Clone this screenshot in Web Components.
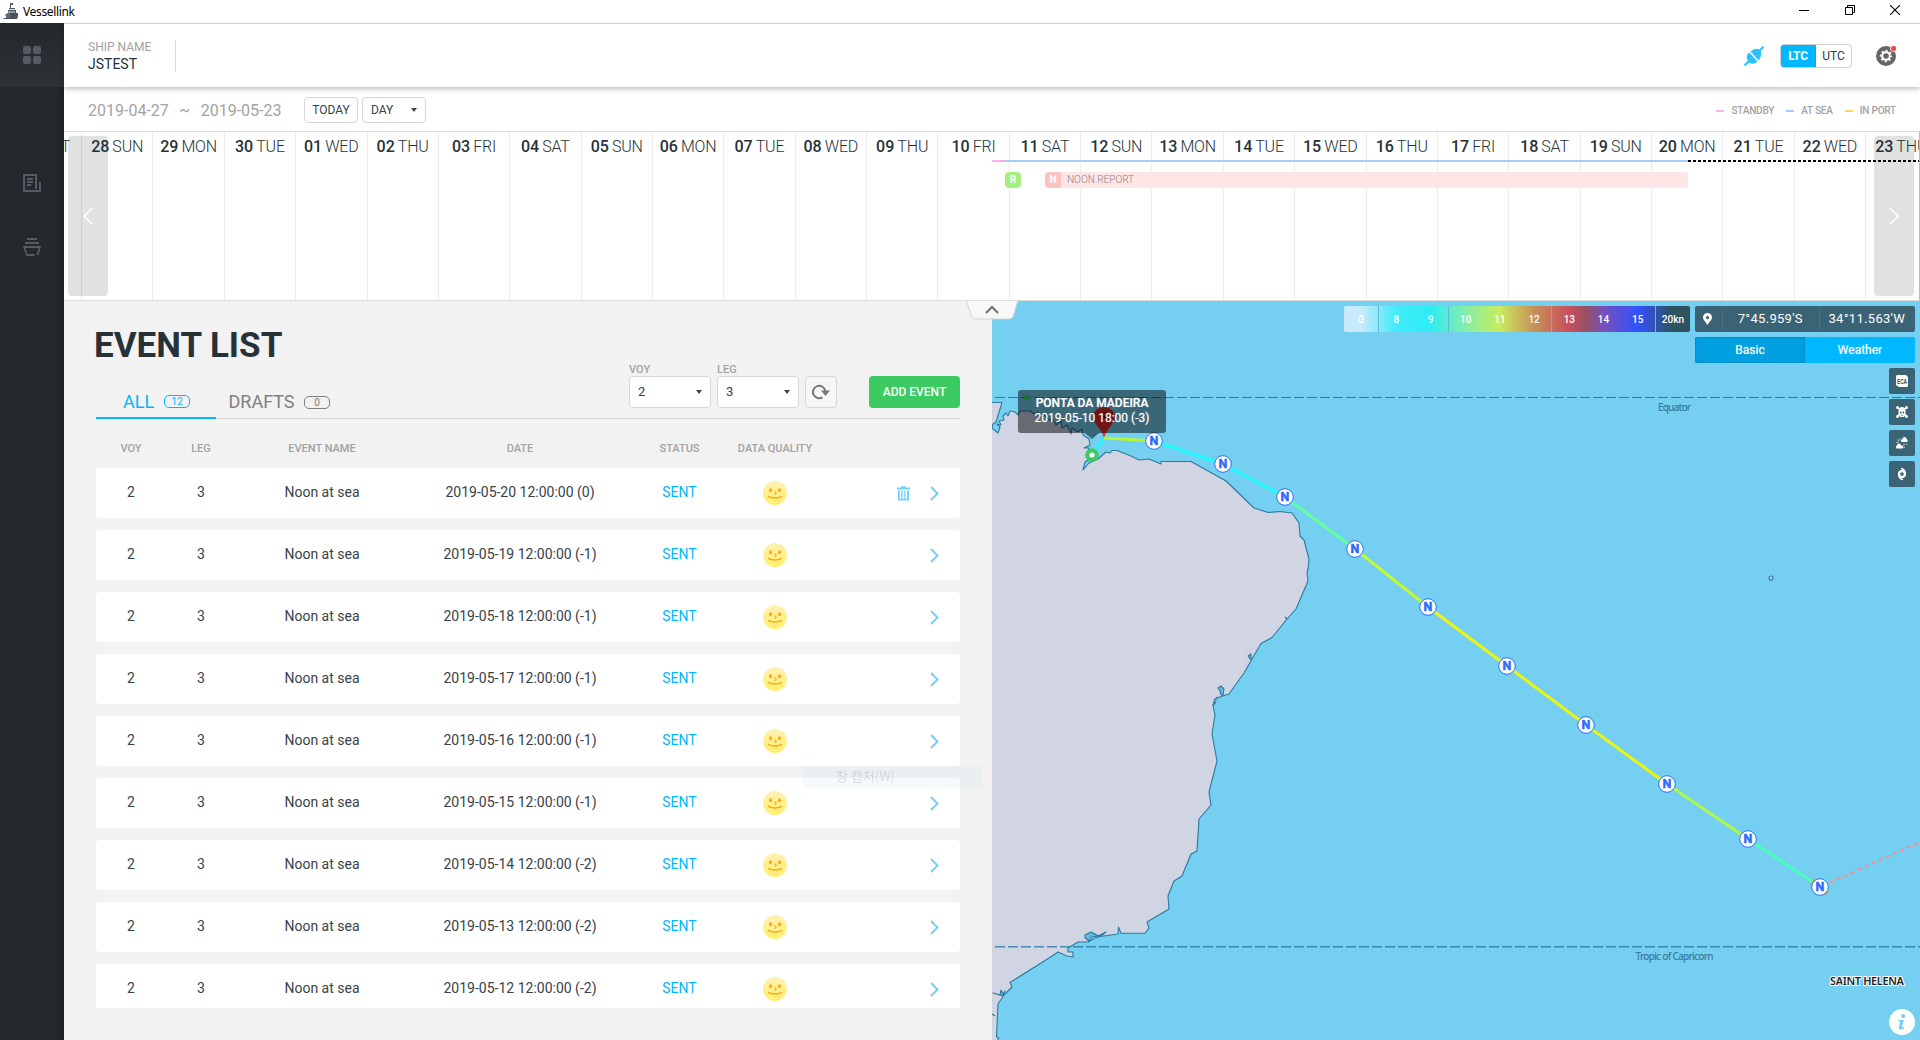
<!DOCTYPE html>
<html lang="en">
<head>
<meta charset="utf-8">
<title>Vessellink</title>
<style>
html,body{margin:0;height:100%;overflow:hidden;background:#fff}
body{font-family:Roboto,"Noto Sans CJK KR",sans-serif;color:#263238}
</style>
</head>
<body>
<vl-app></vl-app>
<script>
function define(name, css, html, setup) {
  const tpl = document.createElement('template');
  tpl.innerHTML = '<style>*{box-sizing:border-box}' + css + '</style>' + html;
  customElements.define(name, class extends HTMLElement {
    constructor() {
      super();
      this.attachShadow({ mode: 'open' }).appendChild(tpl.content.cloneNode(true));
    }
    connectedCallback() { if (setup && !this.ready) { this.ready = true; setup(this, this.shadowRoot); } }
  });
}

/* ---------- window frame ---------- */
define('vl-titlebar', `
:host{box-sizing:border-box;display:flex;height:24px;border-bottom:1px solid #dcdcdc;background:#fff;align-items:center;justify-content:space-between;padding:0 20px 0 3px;color:#000}
.brand{display:flex;align-items:center;gap:5px;font:12px/16px "Noto Sans",sans-serif;letter-spacing:-.35px}
.win{display:flex;gap:35.5px;align-items:center;padding-bottom:3px}
svg{display:block}`, `
<div class="brand"><svg width="15" height="17" viewBox="0 0 15 17"><path d="M7 0h3v2H8v3h4v2h1v3h2v3l-1 3H1l-1-1h3v-2l-1-1 3-2V7h1V5h1z" fill="#4a515c"/><path d="M7 0h2v1.500H8z" fill="#d3526a"/><path d="M6 6h6v1H6zM5 8.500h7v1H5z" fill="#dfe3e8"/><path d="M3 11l4-1v5H3z" fill="#626c79"/></svg><span>Vessellink</span></div>
<div class="win">
<svg width="10" height="10"><path d="M0 5.500h10" stroke="#000"/></svg>
<svg width="10" height="10"><path d="M.5 2.500h7v7h-7zM2.500 2.500v-2h7v7h-2" fill="none" stroke="#000"/></svg>
<svg width="10" height="10"><path d="M0 0l10 10M10 0L0 10" stroke="#000" stroke-width="1.100"/></svg>
</div>`);

define('vl-sidebar', `
:host{display:flex;flex-direction:column;width:64px;background:linear-gradient(90deg,#25292e 0,#25292e 54px,#1d2023 64px);color:#535b65}
.item{height:64px;display:flex;align-items:center;justify-content:center}
.active{background:linear-gradient(#24282c,#2e3237)}
.gap{height:64px}
svg{display:block}`, `
<div class="item active"><svg width="18" height="18" fill="currentColor"><rect width="8" height="8" rx="2"/><rect x="10" width="8" height="8" rx="2"/><rect y="10" width="8" height="8" rx="2"/><rect x="10" y="10" width="8" height="8" rx="2"/></svg></div>
<div class="gap"></div>
<div class="item"><svg width="18" height="18" fill="none" stroke="currentColor" stroke-width="2"><path d="M13 15V1H1v16h16V8M4 5h6M4 8h6M4 11h4"/></svg></div>
<div class="item"><svg width="18" height="18" fill="none" stroke="currentColor" stroke-width="1.800"><path d="M4 1h10M2 5h14M11.500 17H4L1 9h16l-2.500 8"/></svg></div>`);

define('vl-header', `
:host{box-sizing:border-box;display:flex;height:63px;background:#fff;box-shadow:0 2px 5px rgba(0,0,0,.25);position:relative;z-index:3;align-items:center;justify-content:space-between;padding:1px 24px 0}
.ship{height:32px;border-right:1px solid #d9d9d9;padding-right:24px;line-height:21px;font-size:14px;white-space:nowrap}
.ship small{display:block;font-size:12px;line-height:14px;color:#a2a2a2}
.right{display:flex;align-items:center}
.seg{display:flex;width:72px;height:24px;border-radius:4px;border:1px solid #cfcfcf;font-size:12px;margin:0 24px 0 16px;line-height:23px;text-align:center;color:#333b40;overflow:hidden}
.seg span{flex:1}.seg b{width:36px;margin:-1px 0 -1px -1px;line-height:23px;font-size:12px;background:#00b8ff;border:1px solid #1a9fe0;border-radius:4px 0 0 4px;color:#fff;font-weight:700;letter-spacing:-.2px}
svg{display:block}`, `
<div class="ship"><small>SHIP NAME</small>JSTEST</div>
<div class="right">
<svg width="20" height="20" viewBox="0 0 20 20"><g fill="#29c3fa"><path d="M3 12.500Q2 8.500 5.500 6.500L13.500 15.500Q10 19 5.500 17Q3.500 15.500 3 12.500z"/><path d="M6.500 5.500Q10 2 14 3L16.500 4Q18.500 10 14.500 14.500z"/></g><path d="M.5 19.500L5 15M15 5.500L19.500.5" stroke="#29c3fa" stroke-width="2"/><path d="M6 6l8.500 9" stroke="#fff" stroke-width=".9"/></svg>
<div class="seg"><b>LTC</b><span>UTC</span></div>
<svg width="20" height="20" viewBox="0 0 20 20"><circle cx="10" cy="10" r="10" fill="#666"/><circle cx="10" cy="10" r="3.800" fill="none" stroke="#fff" stroke-width="2"/><circle cx="10" cy="10" r="5.300" fill="none" stroke="#fff" stroke-width="1.700" stroke-dasharray="2.080 2.080" stroke-dashoffset="1.040"/><circle cx="17.500" cy="2.500" r="3.300" fill="#fff"/><circle cx="17.500" cy="2.500" r="2.600" fill="#f0464a"/></svg>
</div>`);

/* ---------- form controls ---------- */
define('vl-select', `
:host{box-sizing:border-box;display:flex;align-items:center;justify-content:space-between;background:#fff;border:1px solid #d6d6d6;border-radius:4px;padding:0 8px;font-size:13px;color:#37424a}
i{border:3px solid transparent;border-top:4px solid #444;border-bottom:0}`, `<slot></slot><i></i>`);

define('vl-toolbar', `
:host{box-sizing:border-box;display:flex;height:45px;border-bottom:1px solid #dcdcdc;padding:2px 24px 0;align-items:center;font-size:16px;color:#a2a2a2;white-space:nowrap}
.r{white-space:pre;width:216px}
.btn{width:54px;height:26px;border:1px solid #d6d6d6;border-radius:4px;font-size:12px;line-height:24px;text-align:center;color:#37424a;margin-right:4px}
vl-select{width:64px;height:26px;font-size:12px}
.lg{margin-left:auto;display:flex;font-size:10px;font-weight:500;align-items:center;letter-spacing:-.2px}
.lg i{width:8px;height:2px;margin:1px 7px 0 12px;background:var(--c)}`, `
<span class="r">2019-04-27<span style="padding:0 10.500px">~</span>2019-05-23</span><span class="btn">TODAY</span><vl-select>DAY</vl-select>
<div class="lg"><i style="--c:#ffb3ec"></i>STANDBY<i style="--c:#a3cfff"></i>AT SEA<i style="--c:#ffd35c"></i>IN PORT</div>`);

/* ---------- timeline ---------- */
define('vl-day', `
:host{box-sizing:border-box;display:flex;flex:none;width:71.360px;height:168px;border-left:1px solid #ececec;justify-content:center;font-size:16px;line-height:30px;gap:3px}
b{font-weight:500}span{font-weight:300;letter-spacing:-.15px}`, `<b></b><span></span>`,
(h, r) => { r.querySelector('b').textContent = h.getAttribute('n'); r.querySelector('span').textContent = h.getAttribute('d'); });

define('vl-timeline', `
:host{box-sizing:border-box;display:grid;height:169px;border-bottom:1px solid #dcdcdc;border-right:1px solid #bbb;overflow:hidden;background:#fff}
:host>div{grid-area:1/1;min-width:0}
.days{display:flex;margin-left:-54.300px}
.track{padding:28px 0 0 928px}
.line{display:flex;height:2px}
.line i:nth-child(1){width:13px;background:#ffaeea}.line i:nth-child(2){width:683px;background:#a3cfff}
.line i:nth-child(3){flex:1;background:repeating-linear-gradient(90deg,#000 0 3px,transparent 3px 5px)}
.bars{display:flex;padding:10px 0 0 13px;font-size:10px;line-height:16px}
.k{width:16px;text-align:center;color:#fff;font-weight:700}
.R{background:#a4ee80;border-radius:4px;margin-right:24px}
.bar{width:643px;height:16px;background:#ffe5e5;border-radius:4px;display:flex;overflow:hidden;color:#8d8484;font-weight:300}
.bar .k{background:#ffc2c2;margin-right:6px}
.nav{display:flex;justify-content:space-between;padding:4px 5px 4px 4px;z-index:1}
.nav span{width:40px;height:160px;border-radius:4px;background:rgba(38,40,46,.14);display:flex;align-items:center;justify-content:center}`, `
<div class="days"></div>
<div class="track"><div class="line"><i></i><i></i><i></i></div><div class="bars"><span class="k R">R</span><div class="bar"><span class="k">N</span>NOON REPORT</div></div></div>
<div class="nav"><span><svg width="12" height="18" fill="none" stroke="#fff" stroke-width="1.500"><path d="M10.500 1L2 9.200l8.500 8"/></svg></span><span><svg width="12" height="18" fill="none" stroke="#fff" stroke-width="1.500"><path d="M1.500 1l9 8.200-9 8"/></svg></span></div>`,
(h, r) => {
  const names = ['SAT', 'SUN', 'MON', 'TUE', 'WED', 'THU', 'FRI'];
  for (let i = 0; i < 27; i++) {
    const n = i < 4 ? 27 + i : i - 3, e = document.createElement('vl-day');
    e.setAttribute('n', String(n).padStart(2, '0'));
    e.setAttribute('d', names[i % 7]);
    r.querySelector('.days').append(e);
  }
});

/* ---------- event list ---------- */
const COLS = 'grid-template-columns:70px 70px 172px 224px 95px 96px 1fr;text-align:center;align-items:center;';
define('vl-event-row', `
:host{box-sizing:border-box;display:grid;${COLS}height:50px;background:#fff;border-radius:4px;font-size:14px;color:#37424a;flex:none;padding-bottom:2px;white-space:nowrap}
.s{color:#00b8ff}
svg{display:block}.face{margin:2px auto 0}
.act{display:flex;justify-content:flex-end;gap:20px;align-items:center;padding:2px 21px 0 0}`, `
<span>2</span><span>3</span><span>Noon at sea</span><span><slot></slot></span><span class="s">SENT</span>
<svg class="face" width="24" height="24"><defs><linearGradient id="g" x2="0" y2="1"><stop stop-color="#fff0b8"/><stop offset="1" stop-color="#ffef6c"/></linearGradient></defs><circle cx="12" cy="12" r="12" fill="url(#g)"/><g fill="#ffa500"><ellipse cx="7.500" cy="9.200" rx="1.400" ry="2"/><ellipse cx="16.500" cy="9.200" rx="1.400" ry="2"/></g><path d="M5 15.300Q12 18.700 19 15.300" fill="none" stroke="#ffa500" stroke-width="1.500"/><path d="M11.500 10.800q3 1 .3 2.700" fill="none" stroke="#ffa500" stroke-width="1.200"/></svg>
<div class="act"><svg class="bin" width="13" height="15" fill="#6cd3ff"><path d="M0 1.500h4V.3h5v1.200h4V3.500H0zM1 4.500h1.800V13h1.400V4.500h1.400V13h1.600V4.500h1.400V13H10V4.500h2V14.500H1z"/></svg><svg width="9" height="15" fill="none" stroke="#6cd3ff" stroke-width="2"><path d="M1 1l6.500 6.500L1 14"/></svg></div>`,
(h, r) => { if (!h.hasAttribute('removable')) r.querySelector('.bin').remove(); });

define('vl-event-panel', `
:host{box-sizing:border-box;display:flex;flex-direction:column;width:928px;background:#f2f2f2;padding:0 32px}
h1{font-size:35px;line-height:40px;font-weight:700;margin:25px 0 0 -2px;height:40px;white-space:nowrap}
.bar{display:flex;height:53px;border-bottom:1px solid #d4d4d4}
.tab{display:flex;align-items:center;gap:10px;font-size:18px;color:#808080;height:53px;padding-top:18px}
.tab.on{width:120px;padding-left:27px;color:#00b8ff;border-bottom:2px solid #00b8ff;padding-top:19px}
.tab+.tab{margin-left:12.500px;gap:9.500px}
.tab em{font:normal 10px/11px Roboto;width:26px;height:13px;border:1px solid;border-radius:5px;text-align:center;margin-top:1px}
.tools{display:flex;margin:-2px 0 0 auto;align-items:flex-start;height:44px}
.f{font-size:11px;font-weight:500;line-height:12px;color:#a2a2a2;margin-right:6px}
vl-select{width:82px;height:32px;font-size:13px;font-weight:400}
.re{width:32px;height:32px;margin:12px 32px 0 0;border:1px solid #d6d6d6;border-radius:4px;background:#f7f7f7;display:flex;align-items:center;justify-content:center}
.add{width:91px;height:32px;margin-top:12px;background:#3ccb61;color:#fff;border-radius:4px;font-size:12px;font-weight:500;line-height:32px;text-align:center}
.head{display:grid;${COLS}height:49px;font-size:11px;font-weight:500;color:#a2a2a2;padding-top:9px;align-items:center}
.list{display:flex;flex-direction:column;gap:12px;height:540px;overflow:hidden}
.ghost{position:absolute;left:803px;top:766px;width:179px;height:22px;background:rgba(190,225,245,.16);color:rgba(120,120,120,.22);font:13px/20px "Noto Sans CJK KR",sans-serif;padding-left:33px}`, `
<h1>EVENT LIST</h1>
<div class="bar"><div class="tab on">ALL<em>12</em></div><div class="tab">DRAFTS<em>0</em></div>
<div class="tools"><div class="f">VOY<vl-select>2</vl-select></div><div class="f">LEG<vl-select>3</vl-select></div>
<div class="re"><svg width="18" height="16" fill="none" stroke="#757575" stroke-width="2"><path d="M10.500 13.300A6.200 6.200 0 1 1 13.300 7"/><path d="M9 6.500h9L13.500 12z" fill="#757575" stroke="none"/></svg></div>
<div class="add">ADD EVENT</div></div></div>
<div class="head"><span>VOY</span><span>LEG</span><span>EVENT NAME</span><span>DATE</span><span>STATUS</span><span>DATA QUALITY</span><span></span></div>
<div class="list"></div><div class="ghost">창 캡처(W)</div>`,
(h, r) => {
  const off = [0, -1, -1, -1, -1, -1, -2, -2, -2];
  off.forEach((o, i) => {
    const e = document.createElement('vl-event-row');
    if (!i) e.setAttribute('removable', '');
    e.textContent = `2019-05-${20 - i} 12:00:00 (${o})`;
    r.querySelector('.list').append(e);
  });
});

/* ---------- map ---------- */
define('vl-chart', `:host{display:block}svg{display:block}
.n{font:700 12.500px Roboto;fill:#2f6bff;stroke:#2f6bff;stroke-width:.5;text-anchor:middle}
.geo{font:500 10px "Noto Sans",sans-serif;fill:#38799c;text-anchor:middle}`, `
<svg width="928" height="739" viewBox="992 301 928 739">
<rect x="992" y="301" width="928" height="739" fill="#74cff1"/>
<g fill="#d1d4e3" stroke="#2b7a9f" stroke-width="1.100" stroke-linejoin="round">
<path d="M990 402.500H1002L996 422L993 424L992 428L998 433L1000 427L997 424L1001 425L999 421L1004 420L1003 416L1006 413L1008 416L1010 411L1015 412L1018 415L1020 411L1030 411L1034 414L1038 412L1039 418L1044 415L1050 421L1052 418L1056 425L1061 421L1062 428L1067 425L1071 434L1072 428L1078 432L1082 429L1083 435L1089 439L1090 445L1084 448L1089 448L1087 455L1090 459L1085 462L1083 470L1089 463L1098 459L1106 452L1110 453L1112 450.500H1117L1131 456L1139 460L1149 459L1161 464L1161 461.500H1191L1226 481L1254 508L1268 512.500L1280 511.500L1292 513L1299 523L1300 536L1304 540L1309 559L1308 569L1307 573L1308 581L1296 609L1287 619L1272 637.500L1261 643.500L1252 659L1244 673L1229 694L1224 695.500L1217 698L1213 706L1215 715L1212 734L1217 761L1209 792L1211 805L1199 819L1197 851L1191 854L1182 876L1174 881L1168 896L1169 909L1147 922L1149 928L1145 933.300H1121L1118.500 927L1118 934L1100 936.500L1095 938L1088 942H1078L1068 948V952L1073 952V957L1067 956L1058 952L1049 958L1010 982.500L1012 987L1004 995L998 1004L996.500 1037L999 1038L996 1042H990Z"/>
<g fill="#5fb9dc"><path d="M1085 935l6-3 4 2 3 2-6 1-3 4-4-3z"/><path d="M1096 936l4-1 6-3-5 4z"/><path d="M1218 688l3-2 3 3-1 6-2 0-1-4zM1218 697l-3 2-2 6 3-3M1248 656l3-2v6zM1285 617l2 2"/><path d="M993 993l7 2 1-5 2 4 2-3-2 5zM992 1014l3 2" /></g>
<circle cx="1771" cy="578" r="2"/>
</g>
<g stroke="#2b7a9f" stroke-width="1.100" stroke-dasharray="10 3"><path d="M995 397.500H1920"/><path d="M995 946.700H1920" stroke-width="1.500" opacity=".8"/></g>
<text class="geo" x="1674.500" y="410.500" textLength="33">Equator</text><text class="geo" x="1674.500" y="959.500" textLength="78">Tropic of Capricorn</text>
<text x="1867" y="984.500" text-anchor="middle" textLength="74" style="font:600 11px Noto Sans,sans-serif;fill:#222;stroke:#fff;stroke-width:2px;paint-order:stroke">SAINT HELENA</text>
<circle cx="1026.500" cy="397.500" r="2.500" fill="#2ee85c"/>
<g class="route" fill="none" stroke-width="3"></g>
<path d="M1820 887L1920 842" stroke="#f58e8e" stroke-width="2" stroke-dasharray="4 3.700" stroke-dashoffset="-3"/>
<path d="M1104 438c-2-9-11-15-11-21a11 10 0 0 1 22 0c0 6-9 12-11 21z" fill="#e5282b"/><text x="1104" y="420" style="font:700 11px Roboto;fill:#7c1113;text-anchor:middle">R</text>
<circle cx="1092" cy="455" r="4.700" fill="#fff" stroke="#3ccb61" stroke-width="4.200"/>
<path d="M1811 886l4-7M1824 894l4-2" stroke="#f0a000" stroke-width="2"/>
<g class="nodes"></g>
</svg>`,
(h, r) => {
  const pts = [[1092,455],[1104,438],[1154,441],[1223,464],[1285,497],[1355,549],[1428,607],[1507,666],[1586,725],[1667,784],[1748,839],[1820,887]];
  const col = ['#2af4ff','#b4f53c','#1ffcff','#1ffcff','#62ff9e','#c4fa32','#ecf50e','#ecf50e','#ecf50e','#aef84a','#46ffb8'];
  r.querySelector('.route').innerHTML = col.map((c, i) => `<path stroke="${c}" d="M${pts[i]}L${pts[i + 1]}"/>`).join('');
  r.querySelector('.nodes').innerHTML = pts.slice(2).map(([x, y]) => `<circle cx="${x}" cy="${y}" r="8.300" fill="#fff" stroke="#2f6bff"/><text class="n" x="${x}" y="${y + 4.4}">N</text>`).join('');
});

define('vl-tooltip', `
:host{box-sizing:border-box;display:block;width:148px;height:43px;background:rgba(0,0,0,.5);border-radius:3px;color:#fff;text-align:center;font-size:12px;line-height:15px;padding-top:6px;white-space:nowrap;text-shadow:0 0 1px rgba(255,255,255,.6)}
b{display:block;font-weight:500;font-size:12px}
i{position:absolute;left:67px;top:43px;border:7px solid transparent;border-top:6px solid rgba(0,0,0,.5);border-bottom:0}`, `<b><slot name="port"></slot></b><slot></slot><i></i>`);

define('vl-map', `
:host{display:grid;width:928px;height:739px;overflow:hidden}
vl-chart,.over{grid-area:1/1}
.over{display:flex;justify-content:flex-end;padding:5px 5px 0 0;gap:5px;color:#fff}
vl-tooltip{position:absolute;left:1018px;top:390px}
.speed{display:flex;width:346px;height:26px;border-radius:2px;font-size:10px;font-weight:500;line-height:27px;text-align:center;
background:linear-gradient(90deg,#c8eafa 0 5%,#42ecfa 15%,#2cecf5 25%,#84eeaa 35%,#c8ec5c 45%,#c8905a 55%,#c8505e 65%,#965064 70%,#7650bc 75%,#3252ff 85%,#2e5260 95%)}
.speed span{flex:1 1 0;width:0}.speed .l{border-right:1px solid #6db4d8}
.col{width:220px;display:flex;flex-direction:column;gap:5px}
.pos{height:26px;background:#3a6476;border-radius:2px;display:flex;align-items:center;font-size:13px;letter-spacing:.3px;text-align:center}
.pos span{height:20px;line-height:19px;border-left:1px solid #48707f;flex:1 1 0;padding-right:1px}
.pos svg{margin:0 9px 0 8px}.pos svg+span{margin-left:1px}
.sw{height:26px;display:flex;border-radius:2px;overflow:hidden;background:#00b8ff;font-size:12px;line-height:26px;text-align:center;text-shadow:0 0 1px #fff8}
.sw span{flex:1}.sw .on{background:#00a0e0;box-shadow:inset 0 0 3px #0079b4}
.b{align-self:flex-end;width:26px;height:26px;border-radius:2px;background:#3a6476;display:flex;align-items:center;justify-content:center}
.b text{font:700 6.500px "Liberation Sans";fill:#2a5060}
.info{position:absolute;left:1889px;top:1009px}`, `
<vl-chart></vl-chart>
<div class="over">
<div class="speed"><span class="l">0</span><span>8</span><span class="l">9</span><span>10</span><span>11</span><span class="l">12</span><span>13</span><span>14</span><span class="l">15</span><span>20kn</span></div>
<div class="col">
<div class="pos"><svg width="9" height="12" viewBox="0 0 9 12"><path d="M4.500 12C3 9 0 7 0 4.500a4.500 4.500 0 0 1 9 0C9 7 6 9 4.500 12zm0-9a1.600 1.600 0 1 0 0 3.200 1.600 1.600 0 0 0 0-3.200z" fill="#fff" fill-rule="evenodd"/></svg><span>7°45.959'S</span><span>34°11.563'W</span></div>
<div class="sw"><span class="on">Basic</span><span>Weather</span></div>
<div class="b"><svg width="12" height="12"><path d="M1 0h9l2 2v9l-1 1H3l-3-2V1z" fill="#fff"/><text x="1" y="8.500" textLength="10" lengthAdjust="spacingAndGlyphs">ECA</text></svg></div>
<div class="b"><svg width="12" height="12"><path d="M1 1l10 9.500M11 1L1 10.500" stroke="#fff" stroke-width="1.500"/><g fill="#fff"><circle cx="1.500" cy="1.500" r="1.500"/><circle cx="10.500" cy="1.500" r="1.500"/><circle cx="1.500" cy="10.500" r="1.500"/><circle cx="10.500" cy="10.500" r="1.500"/><path d="M2.500 5a3.500 4 0 0 1 7 0v3L8 11H4L2.500 8z"/></g><g fill="#3a6476"><circle cx="4.700" cy="6.500" r=".9"/><circle cx="7.300" cy="6.500" r=".9"/><path d="M5.500 8.500h1V10h-1z"/></g></svg></div>
<div class="b"><svg width="12" height="12" fill="#fff"><path d="M5.500 5a2 2 0 0 1 1-3 2 2 0 0 1 4 0 1.700 1.700 0 0 1 .5 3zM.5 11.500a1.700 1.700 0 0 1 .5-3 2 2 0 0 1 4 0 1.700 1.700 0 0 1 1.500 3z"/><path d="M1 2.500l2 1.500M4 1.500v2M.5 5.500h2M8 6.500v2.500M10 6.500l1.500 1.500M7.500 10l1.500 1" stroke="#fff" stroke-width=".7"/></svg></div>
<div class="b"><svg width="12" height="14" fill="none" stroke="#fff"><circle cx="6" cy="7" r="3" stroke-width="2.300"/><path d="M9.300 5.500Q8.500 2 5 1.300M2.700 8.500Q3.500 12 7 12.700" stroke-width="1.300"/></svg></div>
</div></div>
<vl-tooltip><span slot="port">PONTA DA MADEIRA</span>2019-05-10 18:00 (-3)</vl-tooltip>
<svg class="info" width="26" height="26"><circle cx="13" cy="13" r="13" fill="#fff"/><g fill="#74cff1"><circle cx="14.200" cy="7" r="2"/><path d="M9.500 11h5.300l-2 7.300q.8.300 2.200-.5v1.500q-5 2.700-5.300-.3l1.500-6.300H9.500z"/></g></svg>`);

define('vl-fold', `
:host{position:absolute;left:966px;top:301px;width:52px;height:19px}svg{display:block}`, `
<svg width="52" height="19"><path d="M0 0h52l-4 14q-1 4-5 4H10q-4 0-5-4z" fill="#f8f8f8"/><path d="M51.500 0l-4 14q-1 4-5 4H10q-4 0-5-4L.5 0" fill="none" stroke="#cfd4d6"/><path d="M20 12l6-6 6 6" fill="none" stroke="#707070" stroke-width="2"/></svg>`);

define('vl-app', `
:host{display:flex;flex-direction:column;width:1920px;height:1040px;overflow:hidden}
.body{display:flex;height:1017px;margin-top:-1px}
vl-sidebar{position:relative}
.main{width:1856px;display:flex;flex-direction:column;padding-top:1px}
.work{display:flex;flex:1}`, `
<vl-titlebar></vl-titlebar>
<div class="body"><vl-sidebar></vl-sidebar><div class="main"><vl-header></vl-header><vl-toolbar></vl-toolbar><vl-timeline></vl-timeline>
<div class="work"><vl-event-panel></vl-event-panel><vl-map></vl-map></div></div></div><vl-fold></vl-fold>`);
</script>
</body>
</html>
